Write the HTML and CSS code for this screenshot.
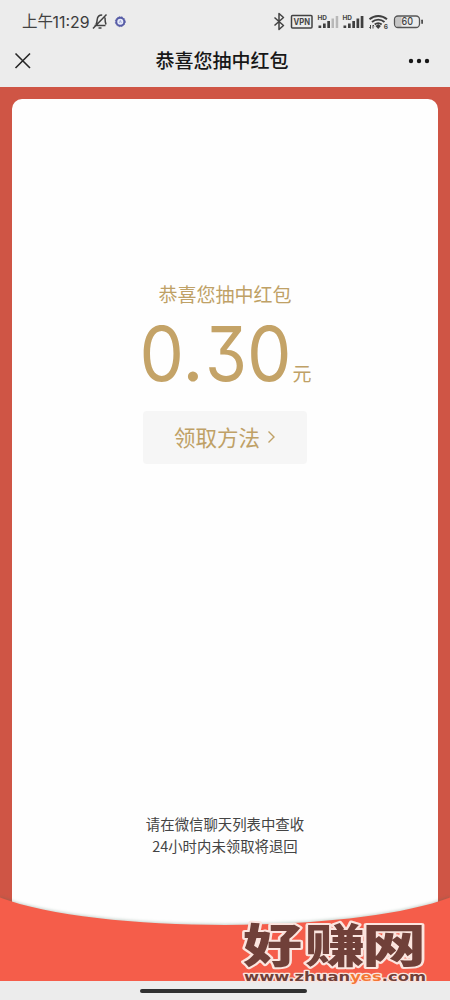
FILE: index.html
```html
<!DOCTYPE html>
<html lang="zh-CN">
<head>
<meta charset="utf-8">
<title>恭喜您抽中红包</title>
<link rel="stylesheet" href="styles.css">
</head>
<body>
<div class="screen">
  <header class="header">
    <svg class="status" width="450" height="40" viewBox="0 0 450 40">
      <text class="time" x="22" y="27">上午</text>
      <text class="clock" x="52.500" y="27.500" textLength="37" lengthAdjust="spacingAndGlyphs">11:29</text>
      <g class="line">
        <path d="M94.5 25.5h11M96 24.5c1-2 1-3 1.200-5 .3-3.500 2.500-4.500 5-4.500M105 17.500c0 3 .2 5 1 7M93 28.500 106.500 14.500M98.500 28h3"/>
        <path d="m274.500 17.500 9 8-4.500 4v-16l4.500 4-9 8"/>
        <rect x="291.500" y="15.500" width="20.500" height="12.500" rx="1"/>
      </g>
      <circle cx="120.300" cy="21.700" r="4" fill="#e7ebfa" stroke="#575ca6" stroke-width="1.900"/>
      <circle cx="120.300" cy="21.700" r="5" fill="none" stroke="#575ca6" stroke-width=".9" stroke-dasharray="1.400 1.270"/>
      <path d="m119.200 23 1.100-2.600 1.100 2.600" fill="none" stroke="#8d95cf" stroke-width=".7"/>
      <text class="tag" x="293.500" y="24.800" font-size="8.500" textLength="16.500" lengthAdjust="spacingAndGlyphs">VPN</text>
      <text class="tag" x="317.500" y="19.500" font-size="6.500" textLength="9.500" lengthAdjust="spacingAndGlyphs">HD</text>
      <text class="tag" x="342.500" y="19.500" font-size="6.500" textLength="9.500" lengthAdjust="spacingAndGlyphs">HD</text>
      <g fill="#3f3f3f">
        <path d="M318.500 25.500h2.700V28h-2.700zM323 23.500h2.700V28H323zM327.300 21h2.700v7h-2.700zM343.500 25.500h2.700V28h-2.700zM348 23.500h2.700V28H348zM352.300 21h2.700v7h-2.700zM356.500 18.500h2.700V28h-2.700zM360.700 16h2.700v12h-2.700z"/>
        <path fill="#b8b8b8" d="M331.500 18.500h2.500V28h-2.500zM335.700 16h2.500v12h-2.500z"/>
        <path d="m375.500 26 2.700-2 2.700 2-2.700 3z"/>
        <rect x="421.300" y="19.500" width="1.600" height="4.500" rx=".8"/>
      </g>
      <path class="wifi" d="M369.500 19.300c5-4.400 12.500-4.400 17.500 0M372 22c3.700-3.200 8.800-3.200 12.500 0M374.700 24.500c2.200-1.700 4.800-1.700 7 0"/>
      <path d="M370.500 25v3.500m-1.200-1.200 1.200 1.200M373 28.500V25m1.200 1.200L373 25" fill="none" stroke="#444" stroke-width="1"/>
      <text class="tag" x="383.800" y="28.800" font-size="6.500">6</text>
      <path d="M397 16.500h4.500v10.500H397q-2-2-2-5.250t2-5.250" fill="#c6c6c6"/>
      <rect x="394.500" y="16" width="25" height="11.500" rx="3.500" fill="none" stroke="#555" stroke-width="1.300"/>
      <text x="401.500" y="25.300" class="battery" textLength="11.500" lengthAdjust="spacingAndGlyphs">60</text>
    </svg>
    <div class="nav">
      <svg class="close" width="18" height="18" viewBox="0 0 18 18"><path d="m1.500 1.500 14.500 14.500M16 1.500 1.500 16"/></svg>
      <h1 class="title">恭喜您抽中红包</h1>
      <svg class="more" width="22" height="6" viewBox="0 0 22 6"><circle cx="3" cy="3" r="2.200"/><circle cx="11" cy="3" r="2.200"/><circle cx="19" cy="3" r="2.200"/></svg>
    </div>
  </header>
  <main class="envelope">
    <section class="card">
      <p class="label">恭喜您抽中红包</p>
      <svg class="amount" width="186" height="80" viewBox="0 0 186 80">
        <g class="digits">
          <text x="7.500" y="64.500" textLength="44.500" lengthAdjust="spacingAndGlyphs">0</text>
          <text class="point" x="51.500" y="64.800">.</text>
          <text x="73" y="64.500" textLength="42" lengthAdjust="spacingAndGlyphs">3</text>
          <text x="115" y="64.500" textLength="44.500" lengthAdjust="spacingAndGlyphs">0</text>
        </g>
        <text class="unit" x="160.500" y="65">元</text>
      </svg>
      <button class="method">领取方法<svg width="9" height="14" viewBox="0 0 9 14"><path d="m1.500 1.500 5.500 5.500-5.500 5.500"/></svg></button>
      <p class="note">请在微信聊天列表中查收<br>24小时内未领取将退回</p>
    </section>
    <svg class="pocket" width="450" height="94" viewBox="0 0 450 94"><path d="M0 10.500C96 47 354 47 450 10.500V94H0z"/></svg>
  </main>
  <footer class="footer"><div class="handle"></div></footer>
  <svg class="watermark" width="200" height="75" viewBox="0 0 200 75">
    <g class="brand">
      <text x="8" y="47" textLength="59" lengthAdjust="spacingAndGlyphs">好</text>
      <text x="70" y="47" textLength="60" lengthAdjust="spacingAndGlyphs">赚</text>
      <text x="127" y="47" textLength="64" lengthAdjust="spacingAndGlyphs">网</text>
    </g>
    <text class="site" x="9" y="66" textLength="182" lengthAdjust="spacingAndGlyphs">www.zhuan<tspan class="accent">yes</tspan>.com</text>
  </svg>
</div>
</body>
</html>
```
FILE: styles.css
```css
* { box-sizing: border-box; }
body { margin: 0; background: #ececec; font-family: "Noto Sans CJK SC", sans-serif; }
.screen { position: relative; width: 450px; height: 1000px; display: flex; flex-direction: column; overflow: hidden; }
.header { height: 87px; flex: none; background: #ececec; }
.status { display: block; }
.time { font-size: 15.5px; fill: #424242; font-weight: 400; }
.clock { font: 400 15.5px Inter, sans-serif; fill: #3c3c3c; }
.line { fill: none; stroke: #424242; stroke-width: 1.5; stroke-linejoin: round; }
.tag { font-family: Inter, sans-serif; font-weight: 700; fill: #444; }
.battery { font: 500 10px Inter, sans-serif; fill: #444; }
.wifi { fill: none; stroke: #3f3f3f; stroke-width: 1.9; }
.nav { height: 41px; display: grid; grid-template-columns: 40px 1fr 40px; align-items: center; padding: 0 20px 0 14px; }
.close { stroke: #272727; stroke-width: 1.6; fill: none; }
.title { margin: 0 0 1px; font-size: 19px; line-height: 28px; font-weight: 500; color: #171717; text-align: center; }
.more { fill: #171717; justify-self: end; }
.envelope { height: 894px; flex: none; background: #cf5545; padding: 12px 12px 0; display: flex; flex-direction: column; position: relative; }
.card { height: 842px; border-radius: 10px 10px 0 0; background: #fefefe; display: flex; flex-direction: column; align-items: center; padding-top: 181px; }
.label { margin: 0; font-size: 19px; line-height: 28px; color: #bfa166; }
.amount { margin-top: 8px; display: block; overflow: visible; }
.digits { font: 400 75px Inter, sans-serif; font-feature-settings: "cv09"; fill: #c4a367; }
.digits .point { font: 400 80px Lato, sans-serif; }
.unit { font-size: 19px; fill: #bfa166; }
.method { margin-top: 15px; width: 164px; height: 53px; border: 0; border-radius: 4px; background: #f6f6f6; color: #bfa166; font: 400 21.5px "Noto Sans CJK SC", sans-serif; display: flex; align-items: center; justify-content: center; gap: 7px; padding: 0 0 2px; }
.method svg { fill: none; stroke: #bfa166; stroke-width: 1.4; }
.note { margin: 349px 0 0; font-size: 14.4px; line-height: 21.5px; color: #444; text-align: center; }
.pocket { position: absolute; left: 0; bottom: 0; fill: #f55d4a; overflow: hidden; }
.pocket path { filter: drop-shadow(0 -1px 1.5px rgba(70, 110, 90, .3)); }
.footer { height: 19px; display: flex; justify-content: center; padding: 8px 3px 0 0; background: #ececec; }
.handle { width: 167px; height: 4px; border-radius: 2px; background: #303030; }
.watermark { position: absolute; left: 235px; top: 915px; overflow: visible; }
.brand { font-size: 46px; font-weight: 900; fill: #704039; stroke: #fbe5df; stroke-width: 4px; paint-order: stroke; stroke-linejoin: round; }
.site { font: 700 12.5px "DejaVu Sans", sans-serif; fill: #704039; stroke: #fbe5df; stroke-width: 2.5px; paint-order: stroke; stroke-linejoin: round; }
.accent { fill: #f47735; }
```
